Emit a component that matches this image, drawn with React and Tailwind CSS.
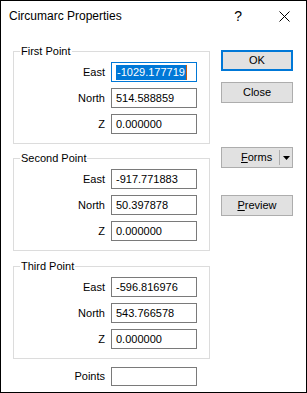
import React from "react";

const groups = [
  { title: "First Point", east: "-1029.177719", north: "514.588859", z: "0.000000", focus: true },
  { title: "Second Point", east: "-917.771883", north: "50.397878", z: "0.000000" },
  { title: "Third Point", east: "-596.816976", north: "543.766578", z: "0.000000" },
];

// plain text box, looks like a win32 edit control
const Field = ({ value, focus }) => (
  <div
    className={`flex h-[20px] w-[86px] items-center border pl-[4px] ${
      focus ? "border-[#0078d7]" : "border-[#7a7a7a]"
    }`}
  >
    {focus ? (
      <>
        <span className="bg-[#0078d7] px-[1px] leading-[15px] text-white">{value}</span>
        <span className="h-[15px] w-[1px] bg-[#c45a10]" />
      </>
    ) : (
      <span className="leading-[15px]">{value}</span>
    )}
  </div>
);

const Row = ({ label, value, focus }) => (
  <div className="flex items-center gap-[6px]">
    <span className="w-[91px] text-right">{label}</span>
    <Field value={value} focus={focus} />
  </div>
);

const GroupBox = ({ group, className }) => (
  <div className={`relative h-[93px] w-[197px] border border-[#dcdcdc] pt-[10px] ${className}`}>
    {/* caption sits on the top border */}
    <span className="absolute left-[6px] top-[-8px] bg-white px-[1px] leading-[14px]">
      {group.title}
    </span>
    <div className="flex flex-col gap-[6px]">
      <Row label="East" value={group.east} focus={group.focus} />
      <Row label="North" value={group.north} />
      <Row label="Z" value={group.z} />
    </div>
  </div>
);

const Button = ({ children, primary, className = "" }) => (
  <div
    className={`flex h-[21px] w-[72px] items-center justify-center bg-[#e1e1e1] ${
      primary ? "border-2 border-[#0078d7]" : "border border-[#adadad]"
    } ${className}`}
  >
    {children}
  </div>
);

export default function App() {
  return (
    <div className="flex h-[393px] w-[307px] flex-col border border-black bg-white font-['Liberation_Sans',Arial,sans-serif] text-[11px] text-black">
      {/* title bar */}
      <div className="flex h-[30px] items-center pl-[8px] pr-[16px]">
        <span className="text-[12px]">Circumarc Properties</span>
        <span className="ml-auto text-[14px] leading-none">?</span>
        <svg className="ml-[37px]" width="11" height="11" viewBox="0 0 11 11">
          <path d="M0.5 0.5 L10.5 10.5 M10.5 0.5 L0.5 10.5" stroke="#000" strokeWidth="1" fill="none" />
        </svg>
      </div>

      <div className="flex pl-[12px]">
        {/* left side: group boxes */}
        <div className="flex flex-col pt-[20px]">
          <GroupBox group={groups[0]} />
          <GroupBox group={groups[1]} className="mt-[14px]" />
          <GroupBox group={groups[2]} className="mt-[15px]" />
          <div className="mt-[8px] flex items-center gap-[6px]">
            <span className="w-[92px] text-right">Points</span>
            <div className="h-[19px] w-[86px] border border-[#7a7a7a]" />
          </div>
        </div>

        {/* right side: buttons */}
        <div className="ml-[11px] flex flex-col pt-[19px]">
          <Button primary>OK</Button>
          <Button className="mt-[11px]">Close</Button>
          <div className="mt-[44px] flex h-[21px] w-[72px] items-center border border-[#adadad] bg-[#e1e1e1]">
            <span className="ml-[19px]">
              <span className="underline">F</span>orms
            </span>
            <span className="ml-[7px] h-[15px] w-[1px] bg-[#adadad]" />
            <svg className="ml-[3px]" width="7" height="4" viewBox="0 0 7 4">
              <path d="M0 0 L7 0 L3.5 4 Z" fill="#000" />
            </svg>
          </div>
          <Button className="mt-[27px]">
            <span>
              <span className="underline">P</span>review
            </span>
          </Button>
        </div>
      </div>
    </div>
  );
}
